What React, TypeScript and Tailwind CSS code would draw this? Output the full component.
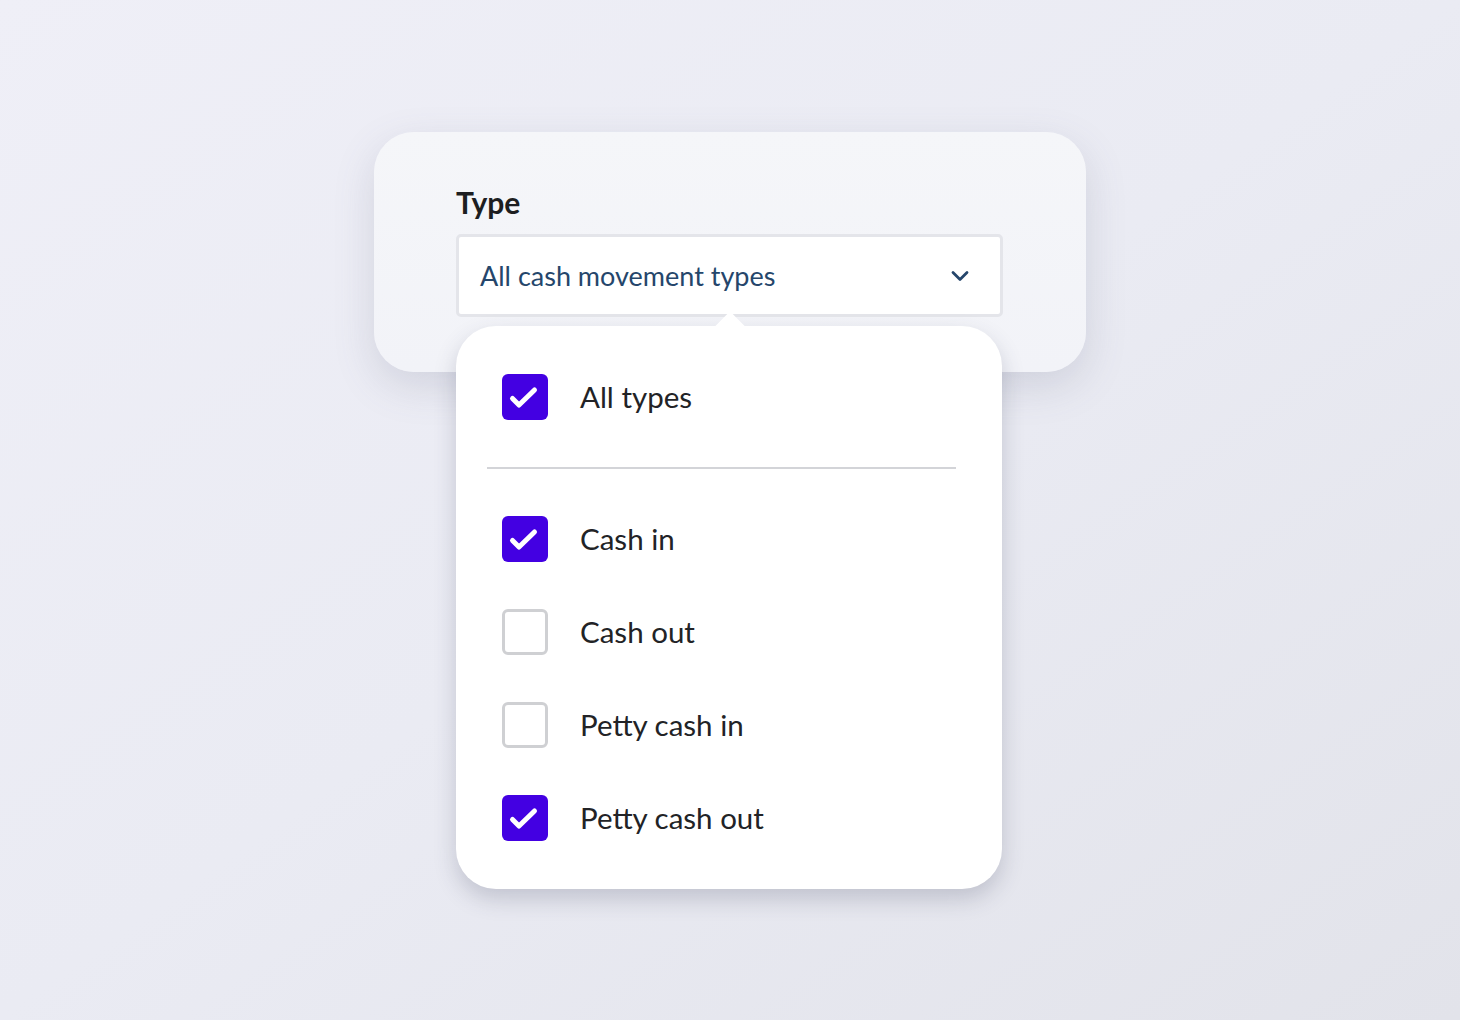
import { ChevronDown } from "lucide-react";

type Option = {
    label: string;
    checked: boolean;
};

const options: Option[] = [
    { label: "Cash in", checked: true },
    { label: "Cash out", checked: false },
    { label: "Petty cash in", checked: false },
    { label: "Petty cash out", checked: true },
];

function Checkbox({ checked }: { checked: boolean }) {
    if (!checked) {
        return <div className="w-[46px] h-[46px] rounded-[6px] border-[3px] border-[#cfd0d3] bg-white shrink-0" />;
    }
    return (
        <div className="w-[46px] h-[46px] rounded-[6px] bg-[#4300e2] shrink-0">
            <svg width="46" height="46" viewBox="0 0 46 46" fill="none">
                <path d="M10.5 24.5l6.5 6.5L32.5 16" stroke="white" strokeWidth={5} strokeLinecap="round" strokeLinejoin="round" />
            </svg>
        </div>
    );
}

function Row({ label, checked }: Option) {
    return (
        <div className="flex items-center gap-[32px] pl-[46px] h-[46px]">
            <Checkbox checked={checked} />
            <span className="text-[29.5px] text-[#222326] leading-none">{label}</span>
        </div>
    );
}

export default function App() {
    return (
        <div
            className="w-[1460px] h-[1020px] bg-gradient-to-br from-[#efeff7] via-[#eaebf3] to-[#e2e3ea] pt-[132px] pl-[374px]"
            style={{ fontFamily: "Lato, 'Noto Sans', sans-serif" }}
        >
            {/* carte de fond */}
            <div className="w-[712px] h-[240px] rounded-[40px] bg-gradient-to-b from-[#f5f6f9] to-[#f2f3f8] shadow-[0_14px_40px_rgba(90,95,120,0.18)] pl-[82px] pt-[52px]">
                <h2 className="text-[30px] font-bold text-[#1d1e21] leading-[36px] mb-[14px]">Type</h2>

                <div className="relative w-[547px]">
                    <div className="h-[83px] bg-white border-[3px] border-[#e4e5ea] rounded-[5px] flex items-center justify-between pl-[21px] pr-[26px]">
                        <span className="text-[27px] text-[#25466b] leading-none">All cash movement types</span>
                        <ChevronDown className="w-[28px] h-[28px] text-[#25466b]" strokeWidth={2.4} />
                    </div>

                    {/* menu */}
                    <div className="absolute left-0 top-[92px] w-[546px] rounded-[40px] bg-white shadow-[0_10px_22px_rgba(60,65,90,0.22)] pt-[48px] pb-[48px] flex flex-col gap-[47px] z-10">
                        <div className="absolute left-[263px] top-[-10px] w-[22px] h-[22px] bg-white rotate-45 rounded-[2px]" />
                        <div className="relative">
                            <Row label="All types" checked={true} />
                        </div>
                        <div className="ml-[31px] w-[469px] h-[2px] bg-[#d3d4d8]" />
                        {options.map((o) => (
                            <Row key={o.label} label={o.label} checked={o.checked} />
                        ))}
                    </div>
                </div>
            </div>
        </div>
    );
}
